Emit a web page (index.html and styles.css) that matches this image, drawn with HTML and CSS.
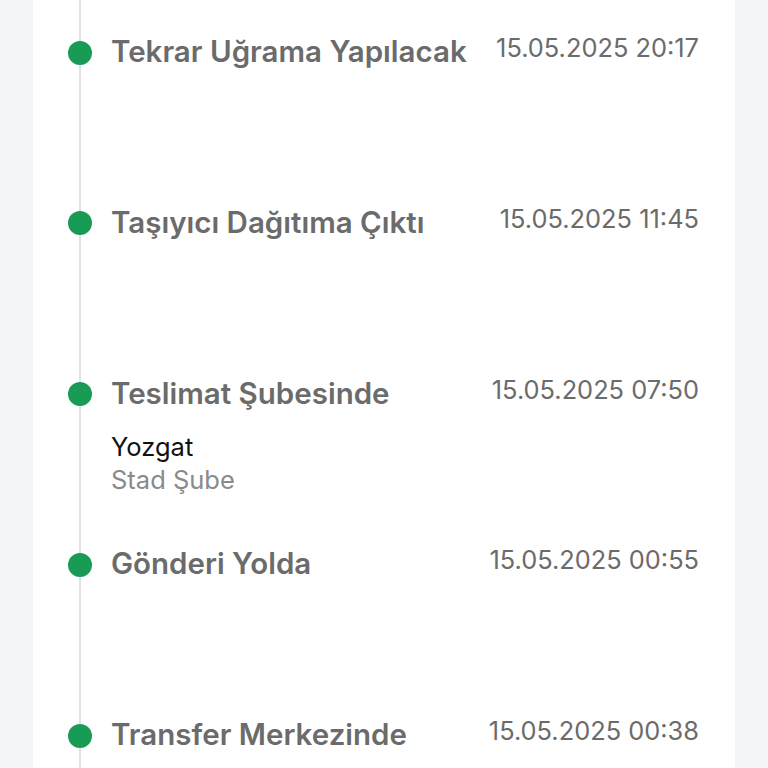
FILE: index.html
```html
<!DOCTYPE html>
<html lang="tr">
<head>
  <meta charset="UTF-8">
  <meta name="viewport" content="width=device-width, initial-scale=1.0">
  <title>Gönderi Takibi</title>
  <link rel="stylesheet" href="styles.css">
</head>
<body>

<div class="card">
  <ul class="timeline">
    <li class="step">
      <div class="marker"><span class="dot"></span></div>
      <div class="info">
        <div class="title">Tekrar Uğrama Yapılacak</div>
      </div>
      <div class="date">15.05.2025 20:17</div>
    </li>
    <li class="step">
      <div class="marker"><span class="dot"></span></div>
      <div class="info">
        <div class="title">Taşıyıcı Dağıtıma Çıktı</div>
      </div>
      <div class="date">15.05.2025 11:45</div>
    </li>
    <li class="step">
      <div class="marker"><span class="dot"></span></div>
      <div class="info">
        <div class="title">Teslimat Şubesinde</div>
        <div class="city">Yozgat</div>
        <div class="branch">Stad Şube</div>
      </div>
      <div class="date">15.05.2025 07:50</div>
    </li>
    <li class="step">
      <div class="marker"><span class="dot"></span></div>
      <div class="info">
        <div class="title">Gönderi Yolda</div>
      </div>
      <div class="date">15.05.2025 00:55</div>
    </li>
    <li class="step">
      <div class="marker"><span class="dot"></span></div>
      <div class="info">
        <div class="title">Transfer Merkezinde</div>
      </div>
      <div class="date">15.05.2025 00:38</div>
    </li>
  </ul>
</div>

</body>
</html>
```

FILE: styles.css
```css
body {
  margin: 0;
  padding: 0;
  background-color: #f4f5f7;
  font-family: Inter, "Noto Sans", sans-serif;
  overflow: hidden;
}
.card {
  margin: 0 33px;
  padding: 0 36px 0 0;
  background-color: #fff;
  min-height: 768px;
}
.timeline {
  list-style: none;
  margin: 0;
  padding: 0;
}
.step {
  display: flex;
  height: 170.75px;
}
.marker {
  flex: 0 0 78px;
  background: linear-gradient(#e2e2e2, #e2e2e2) no-repeat 46px 0 / 2px 100%;
}
.dot {
  display: block;
  width: 24px;
  height: 24px;
  margin: 40.5px 0 0 35px;
  border-radius: 50%;
  background-color: #189b55;
}
.info {
  flex: 1;
  padding-top: 32px;
}
.title {
  font-size: 29.5px;
  font-weight: 600;
  line-height: 38px;
  color: #6b6b6b;
}
.city {
  margin-top: 18px;
  font-size: 25.5px;
  line-height: 33px;
  color: #111;
}
.branch {
  font-size: 25.5px;
  line-height: 33px;
  color: #8a8a8a;
}
.date {
  padding-top: 32px;
  font-size: 25.4px;
  line-height: 32px;
  color: #6b6b6b;
  white-space: nowrap;
}
```
